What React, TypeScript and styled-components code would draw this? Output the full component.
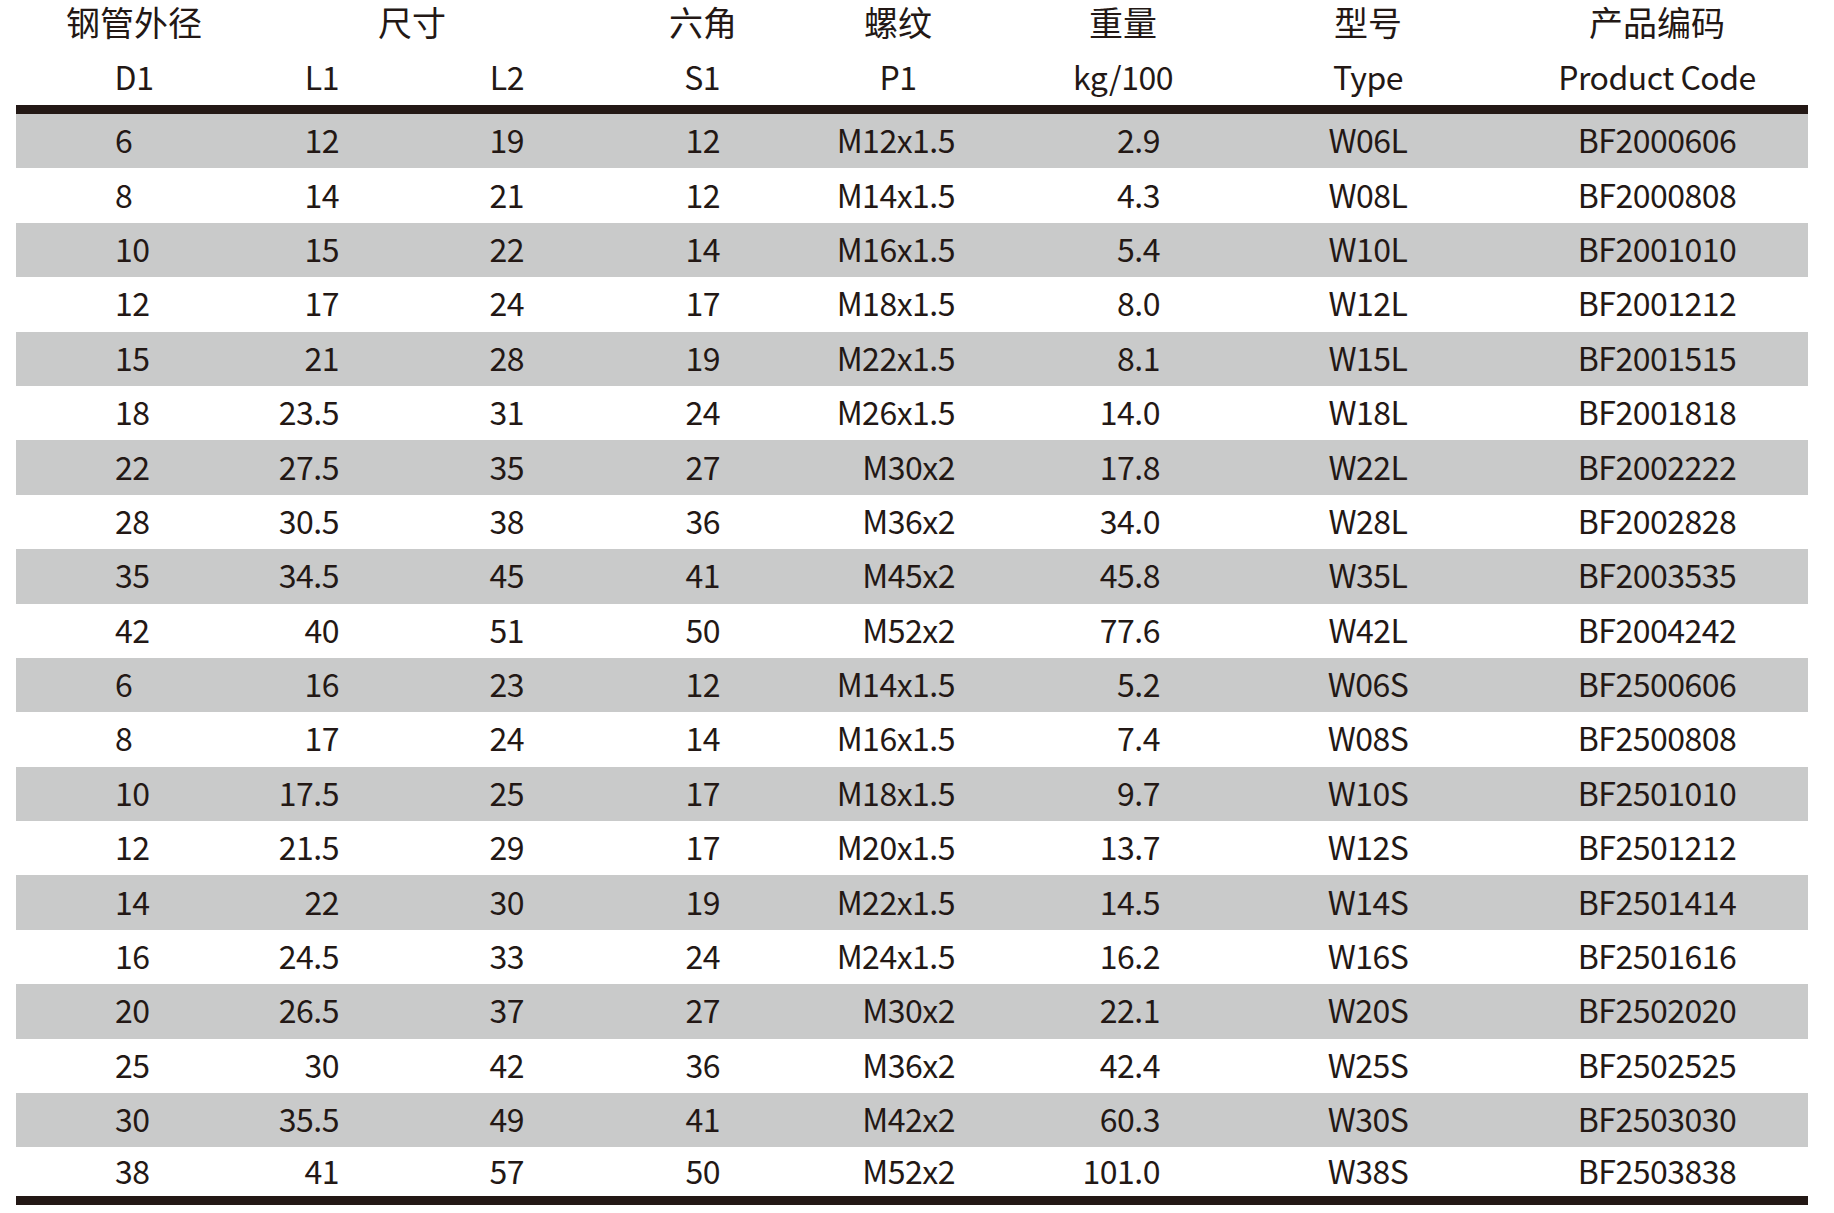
import styled, { createGlobalStyle } from 'styled-components';

const GlobalStyle = createGlobalStyle`
  html, body {
    margin: 0;
    padding: 0;
    background: #fff;
  }
  body {
    font-family: "Noto Sans CJK SC", "Noto Sans", sans-serif;
    color: #231815;
  }
`;

// column widths across the 1792px table
const COLS = '236px 98px 222px 262px 128px 322px 168px 356px';

type Row = [string, string, string, string, string, string, string, string];

const rows: Row[] = [
  ['6', '12', '19', '12', 'M12x1.5', '2.9', 'W06L', 'BF2000606'],
  ['8', '14', '21', '12', 'M14x1.5', '4.3', 'W08L', 'BF2000808'],
  ['10', '15', '22', '14', 'M16x1.5', '5.4', 'W10L', 'BF2001010'],
  ['12', '17', '24', '17', 'M18x1.5', '8.0', 'W12L', 'BF2001212'],
  ['15', '21', '28', '19', 'M22x1.5', '8.1', 'W15L', 'BF2001515'],
  ['18', '23.5', '31', '24', 'M26x1.5', '14.0', 'W18L', 'BF2001818'],
  ['22', '27.5', '35', '27', 'M30x2', '17.8', 'W22L', 'BF2002222'],
  ['28', '30.5', '38', '36', 'M36x2', '34.0', 'W28L', 'BF2002828'],
  ['35', '34.5', '45', '41', 'M45x2', '45.8', 'W35L', 'BF2003535'],
  ['42', '40', '51', '50', 'M52x2', '77.6', 'W42L', 'BF2004242'],
  ['6', '16', '23', '12', 'M14x1.5', '5.2', 'W06S', 'BF2500606'],
  ['8', '17', '24', '14', 'M16x1.5', '7.4', 'W08S', 'BF2500808'],
  ['10', '17.5', '25', '17', 'M18x1.5', '9.7', 'W10S', 'BF2501010'],
  ['12', '21.5', '29', '17', 'M20x1.5', '13.7', 'W12S', 'BF2501212'],
  ['14', '22', '30', '19', 'M22x1.5', '14.5', 'W14S', 'BF2501414'],
  ['16', '24.5', '33', '24', 'M24x1.5', '16.2', 'W16S', 'BF2501616'],
  ['20', '26.5', '37', '27', 'M30x2', '22.1', 'W20S', 'BF2502020'],
  ['25', '30', '42', '36', 'M36x2', '42.4', 'W25S', 'BF2502525'],
  ['30', '35.5', '49', '41', 'M42x2', '60.3', 'W30S', 'BF2503030'],
  ['38', '41', '57', '50', 'M52x2', '101.0', 'W38S', 'BF2503838'],
];

// how each column places its values
const align: { side: 'left' | 'right' | 'center'; pad: number }[] = [
  { side: 'left', pad: 99 },
  { side: 'right', pad: 11 },
  { side: 'right', pad: 48 },
  { side: 'right', pad: 114 },
  { side: 'right', pad: 7 },
  { side: 'right', pad: 124 },
  { side: 'center', pad: 0 },
  { side: 'center', pad: 54 },
];

const Page = styled.div`
  padding: 0 26px 0 16px;
  width: 1792px;
`;

const Table = styled.div`
  width: 1792px;
  display: flex;
  flex-direction: column;
`;

const TitleRow = styled.div`
  display: grid;
  grid-template-columns: ${COLS};
  height: 44px;
  align-items: center;
`;

const Title = styled.div<{ $span?: number; $shift?: number }>`
  grid-column: span ${(p) => p.$span ?? 1};
  text-align: center;
  font-size: 34px;
  line-height: 44px;
  padding-left: ${(p) => p.$shift ?? 0}px;
`;

const SubRow = styled.div`
  display: grid;
  grid-template-columns: ${COLS};
  height: 57px;
  padding-top: 4px;
  align-items: center;
  border-bottom: 9px solid #231815;
`;

const Sub = styled.div<{ $side: string; $pad: number }>`
  font-size: 32px;
  line-height: 57px;
  letter-spacing: -0.5px;
  text-align: ${(p) => p.$side};
  padding-right: ${(p) => (p.$side === 'right' ? p.$pad : 0)}px;
  padding-left: ${(p) => (p.$side === 'center' ? p.$pad : 0)}px;
`;

const DataRow = styled.div<{ $shaded: boolean; $last: boolean }>`
  display: grid;
  grid-template-columns: ${COLS};
  height: ${(p) => (p.$last ? 48.4 : 54.4)}px;
  align-items: center;
  background: ${(p) => (p.$shaded ? '#c9caca' : '#fff')};
  border-bottom: ${(p) => (p.$last ? '9px solid #231815' : 'none')};
`;

const Cell = styled.div<{ $side: string; $pad: number }>`
  font-size: 32px;
  line-height: 40px;
  letter-spacing: -0.5px;
  padding-bottom: 4px;
  text-align: ${(p) => p.$side};
  padding-right: ${(p) => (p.$side === 'right' ? p.$pad : 0)}px;
  padding-left: ${(p) => (p.$side === 'left' || p.$side === 'center' ? p.$pad : 0)}px;
`;

export default function App() {
  return (
    <>
      <GlobalStyle />
      <Page>
        <Table>
          <TitleRow>
            <Title>钢管外径</Title>
            <Title $span={2}>尺寸</Title>
            <Title>六角</Title>
            <Title>螺纹</Title>
            <Title>重量</Title>
            <Title>型号</Title>
            <Title $shift={54}>产品编码</Title>
          </TitleRow>
          <SubRow>
            <Sub $side="center" $pad={0}>D1</Sub>
            <Sub $side="right" $pad={11}>L1</Sub>
            <Sub $side="right" $pad={48}>L2</Sub>
            <Sub $side="right" $pad={114}>S1</Sub>
            <Sub $side="center" $pad={0}>P1</Sub>
            <Sub $side="center" $pad={0}>kg/100</Sub>
            <Sub $side="center" $pad={0}>Type</Sub>
            <Sub $side="center" $pad={54}>Product Code</Sub>
          </SubRow>
          {rows.map((r, i) => (
            <DataRow key={i} $shaded={i % 2 === 0} $last={i === rows.length - 1}>
              {r.map((v, j) => (
                <Cell key={j} $side={align[j].side} $pad={align[j].pad}>
                  {v}
                </Cell>
              ))}
            </DataRow>
          ))}
        </Table>
      </Page>
    </>
  );
}
